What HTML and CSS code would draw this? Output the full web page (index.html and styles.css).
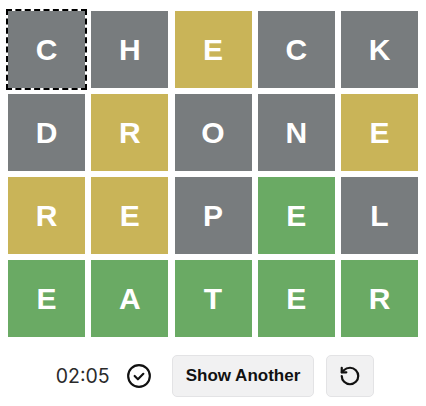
FILE: index.html
```html
<!DOCTYPE html>
<html lang="en">
<head>
    <meta charset="UTF-8">
    <meta name="viewport" content="width=device-width, initial-scale=1.0">
    <title>Wordle board</title>
    <link rel="stylesheet" href="styles.css">
</head>
<body>
    <div class="board">
        <div class="tile absent selected">C</div>
        <div class="tile absent">H</div>
        <div class="tile present">E</div>
        <div class="tile absent">C</div>
        <div class="tile absent">K</div>

        <div class="tile absent">D</div>
        <div class="tile present">R</div>
        <div class="tile absent">O</div>
        <div class="tile absent">N</div>
        <div class="tile present">E</div>

        <div class="tile present">R</div>
        <div class="tile present">E</div>
        <div class="tile absent">P</div>
        <div class="tile correct">E</div>
        <div class="tile absent">L</div>

        <div class="tile correct">E</div>
        <div class="tile correct">A</div>
        <div class="tile correct">T</div>
        <div class="tile correct">E</div>
        <div class="tile correct">R</div>
    </div>

    <div class="controls">
        <span class="timer">02:05</span>
        <svg class="check" width="26" height="26" viewBox="0 0 24 24" fill="none" stroke="#111" stroke-width="2" stroke-linecap="round" stroke-linejoin="round">
            <circle cx="12" cy="12" r="10"/>
            <path d="m8 12 3 3 5-5"/>
        </svg>
        <button class="btn">Show Another</button>
        <button class="btn icon-btn" aria-label="Restart">
            <svg width="22" height="22" viewBox="0 0 24 24" fill="none" stroke="#111" stroke-width="2.4" stroke-linecap="round" stroke-linejoin="round">
                <path d="M3 12a9 9 0 1 0 9-9 9.75 9.75 0 0 0-6.74 2.74L3 8"/>
                <path d="M3 3v5h5"/>
            </svg>
        </button>
    </div>
</body>
</html>
```

FILE: styles.css
```css
body {
    margin: 0;
    padding: 11px 8px 0;
    background: #fff;
    font-family: "Liberation Sans", Arial, sans-serif;
}

.board {
    display: grid;
    grid-template-columns: repeat(5, 77px);
    grid-auto-rows: 77px;
    gap: 6px 6.25px;
}

.tile {
    display: flex;
    align-items: center;
    justify-content: center;
    color: #fff;
    font-size: 30px;
    font-weight: bold;
}

.absent {
    background: #787c7e;
}
.present {
    background: #c9b458;
}
.correct {
    background: #6aaa64;
}

.selected {
    outline: 2px dashed #000;
}

.controls {
    display: flex;
    align-items: center;
    justify-content: center;
    margin-top: 18px;
    padding-left: 4px;
}

.timer {
    font-size: 19.5px;
    color: #2a2a2a;
    font-family: "Inter", "Liberation Sans", sans-serif;
    margin-right: 16px;
}

.check {
    margin-right: 20px;
}

.btn {
    height: 42px;
    padding: 0 13px;
    background: #f1f1f2;
    border: 1px solid #e3e3e5;
    border-radius: 5px;
    font-family: "Liberation Sans", Arial, sans-serif;
    font-size: 17px;
    font-weight: bold;
    color: #111;
}

.icon-btn {
    width: 48px;
    padding: 0;
    margin-left: 12px;
    display: flex;
    align-items: center;
    justify-content: center;
}
```
